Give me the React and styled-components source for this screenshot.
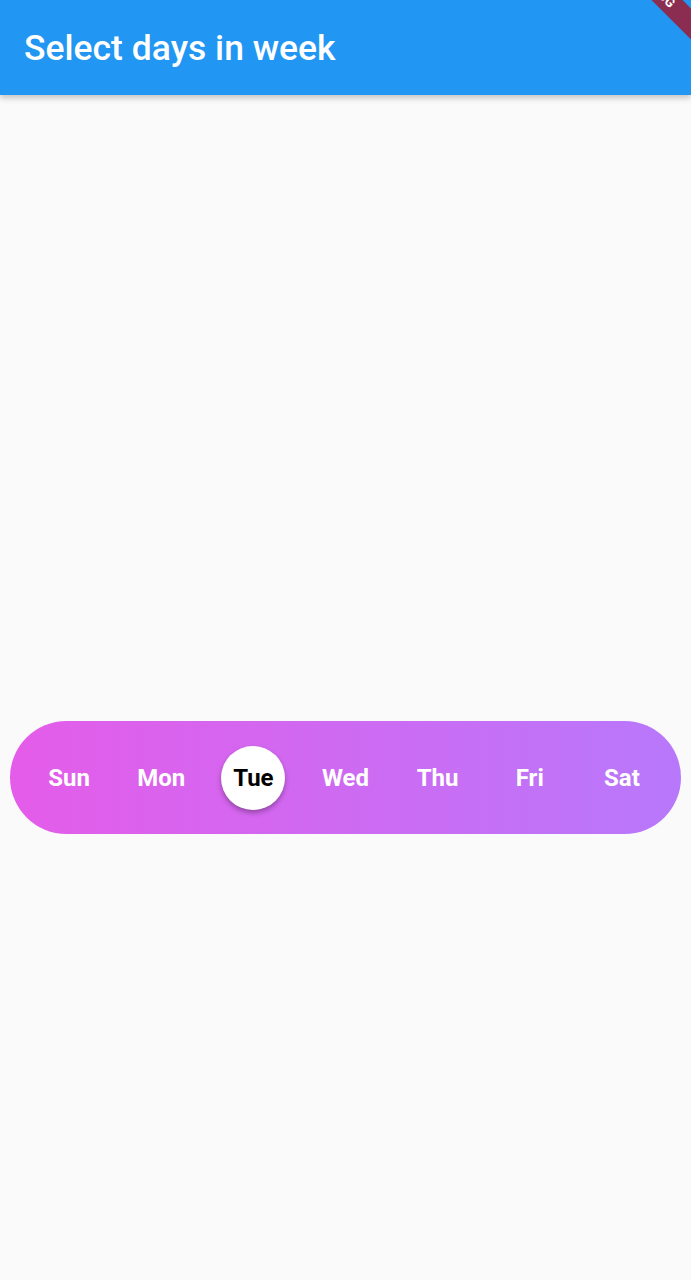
import React, { useState } from "react";
import styled, { createGlobalStyle } from "styled-components";

const GlobalStyle = createGlobalStyle`
  html, body {
    margin: 0;
    padding: 0;
    background: #fafafa;
    font-family: Roboto, "Noto Sans", sans-serif;
  }
`;

const Page = styled.div`
  position: relative;
  min-height: 1280px;
  display: flex;
  flex-direction: column;
  overflow: hidden;
`;

const AppBar = styled.header`
  height: 95px;
  background: #2196f3;
  display: flex;
  align-items: center;
  padding: 0 24px;
  box-shadow: 0 3px 6px rgba(0, 0, 0, 0.22);
  position: relative;
  z-index: 1;
`;

const Title = styled.h1`
  margin: 0;
  color: #fff;
  font-size: 35.5px;
  font-weight: 500;
`;

const Body = styled.main`
  flex: 1;
  display: flex;
  align-items: flex-start;
  padding: 626px 10px 0;
`;

const DayBar = styled.div`
  flex: 1;
  height: 113px;
  border-radius: 57px;
  background: linear-gradient(90deg, #e45ce9 0%, #b878fb 100%);
  display: grid;
  grid-template-columns: repeat(7, 1fr);
  align-items: center;
  padding: 0 13px;
`;

const Day = styled.button`
  justify-self: center;
  width: 64px;
  height: 64px;
  border: none;
  border-radius: 50%;
  padding: 0;
  font-family: Roboto, sans-serif;
  font-size: 24px;
  font-weight: 700;
  cursor: pointer;
  color: ${(p) => (p.selected ? "#000" : "#fff")};
  background: ${(p) => (p.selected ? "#fff" : "transparent")};
  box-shadow: ${(p) => (p.selected ? "0 3px 5px rgba(0,0,0,0.3)" : "none")};
`;

const Banner = styled.div`
  position: absolute;
  left: 598px;
  top: -20px;
  width: 120px;
  height: 22px;
  background: #8b2d50;
  transform: rotate(45deg);
  color: #fff;
  font-size: 13px;
  font-weight: 700;
  text-align: center;
  line-height: 22px;
  z-index: 2;
`;

const days = ["Sun", "Mon", "Tue", "Wed", "Thu", "Fri", "Sat"];

export default function App() {
  const [selected, setSelected] = useState("Tue");
  return (
    <Page>
      <GlobalStyle />
      <AppBar>
        <Title>Select days in week</Title>
      </AppBar>
      <Banner>DEBUG</Banner>
      <Body>
        <DayBar>
          {days.map((d) => (
            <Day key={d} selected={d === selected} onClick={() => setSelected(d)}>
              {d}
            </Day>
          ))}
        </DayBar>
      </Body>
    </Page>
  );
}
